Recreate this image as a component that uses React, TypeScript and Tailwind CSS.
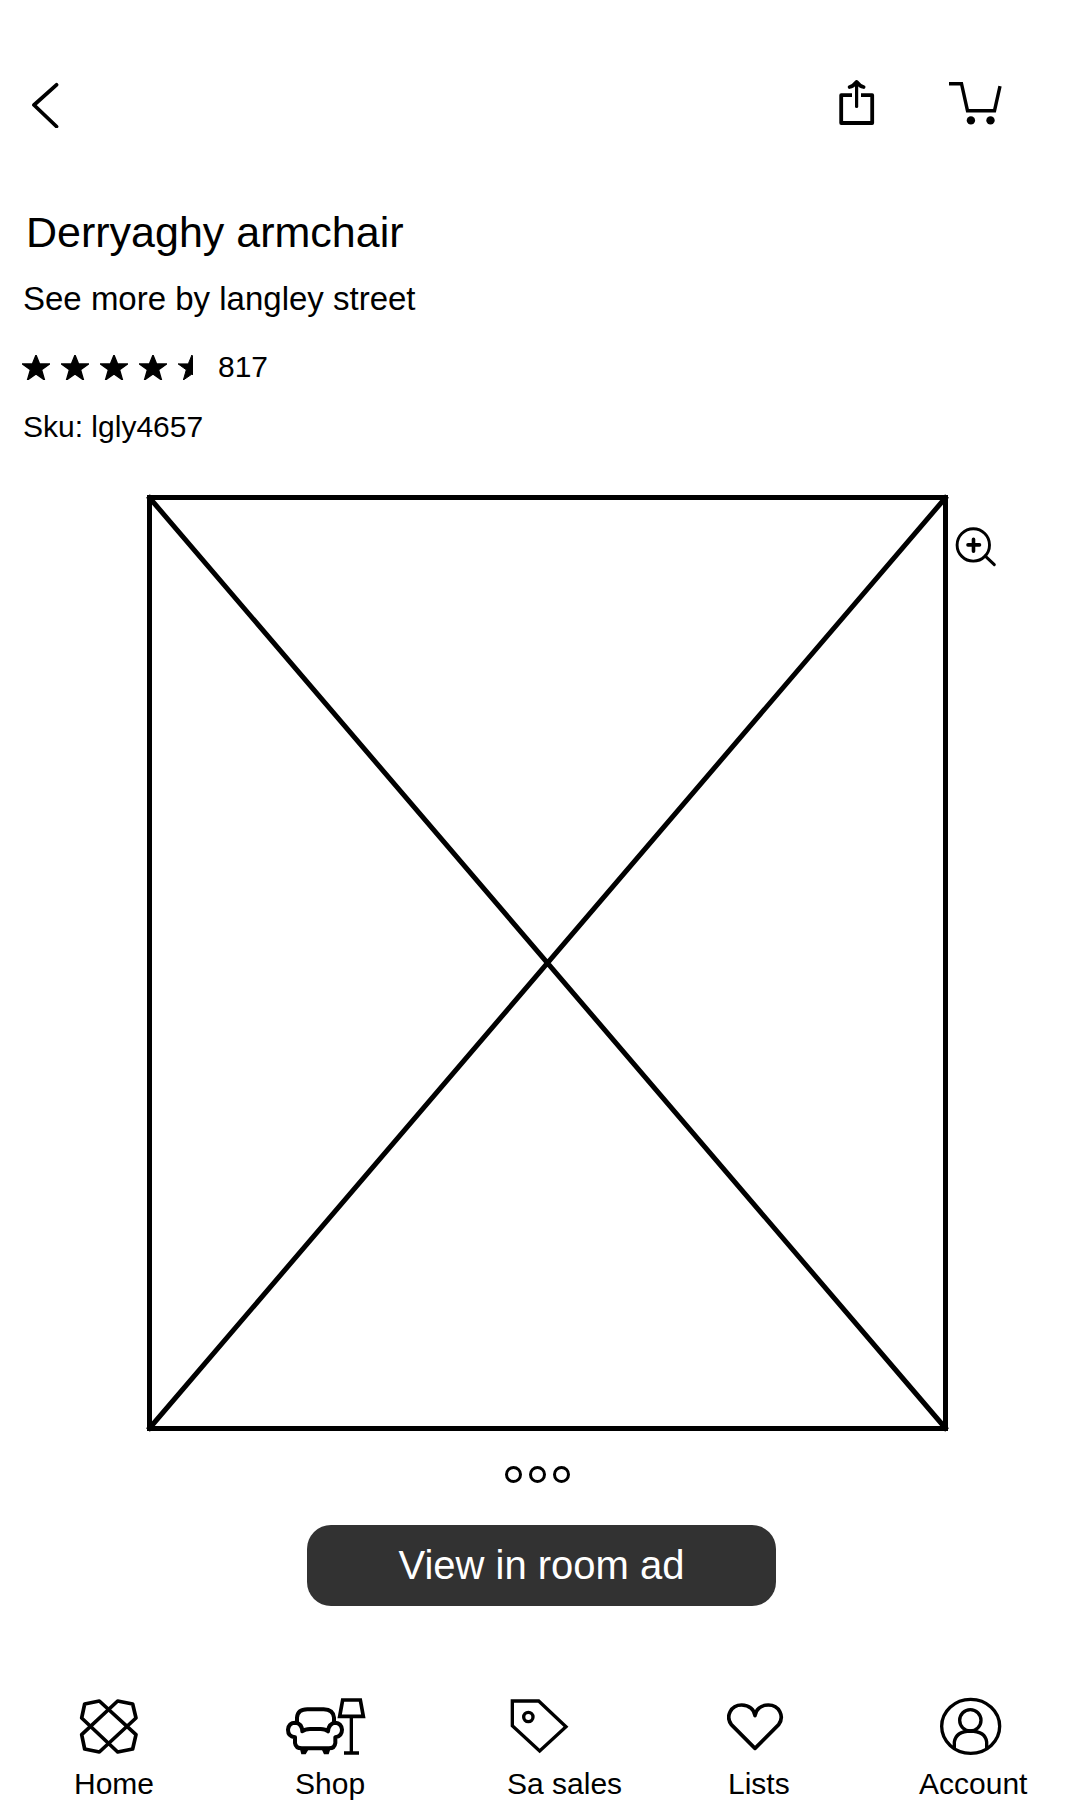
import type { ReactNode } from "react";

const STAR = "42,0 53,27 84,27 59,45 68,76 42,58 16,76 25,45 0,27 31,27";

function Star({ half = false }: { half?: boolean }) {
  return half ? (
    <svg className="h-[25px] w-[15px]" viewBox="0 0 45 76" aria-hidden="true">
      <polygon points={STAR} stroke="black" strokeWidth="3" />
    </svg>
  ) : (
    <svg className="h-[25px] w-7" viewBox="0 0 84 76" aria-hidden="true">
      <polygon points={STAR} stroke="black" strokeWidth="4" />
    </svg>
  );
}

function NavItem({ label, labelClass = "", children }: { label: string; labelClass?: string; children: ReactNode }) {
  return (
    <a href="#" className="flex flex-col items-start gap-3 text-[30px] leading-8 whitespace-nowrap">
      {children}
      <span className={labelClass}>{label}</span>
    </a>
  );
}

function Header() {
  return (
    <header className="flex items-center justify-between pt-[78px] pr-[76px] pl-[30px]">
      <button type="button" aria-label="Back">
        <svg className="h-[50px] w-[30px]" viewBox="30 78 30 50" fill="none" stroke="black" strokeWidth="3.8" strokeLinecap="round" strokeLinejoin="round">
          <path d="M56.5 84.8 34 105 56.5 126.5" />
        </svg>
      </button>
      <div className="flex gap-[68px]">
        <button type="button" aria-label="Share">
          <svg className="h-[50px] w-[42px]" viewBox="836 78 42 50" fill="none" stroke="black" strokeWidth="3.8" strokeLinejoin="round">
            <path d="M852 95.2H841.2V123H872.2V95.2H861" />
            <path d="M856.6 82V106.5" strokeWidth="3.2" strokeLinecap="round" />
            <path d="M849.6 87Q853 86.4 856.6 82Q860 86.4 863.6 87" strokeWidth="3.8" strokeLinecap="round" />
          </svg>
        </button>
        <button type="button" aria-label="Cart">
          <svg className="h-[50px] w-[58px]" viewBox="946 78 58 50" fill="none" stroke="black" strokeWidth="3.4">
            <path d="M949 83.7H961.5L967.5 110.7H994.5L1000 86.2" />
            <circle cx="970.9" cy="120.4" r="4.2" fill="black" stroke="none" />
            <circle cx="990.5" cy="120.4" r="4.2" fill="black" stroke="none" />
          </svg>
        </button>
      </div>
    </header>
  );
}

function ProductInfo() {
  return (
    <section className="mt-[78px] pl-[23px]">
      <h1 className="ml-[3px] text-[43px] leading-[52px]">Derryaghy armchair</h1>
      <a href="#" className="mt-[21px] block text-[33px] leading-10">
        See more by langley street
      </a>
      <div className="-ml-px mt-[30px] flex items-center text-[30px] leading-9">
        <div className="flex gap-[11px]" role="img" aria-label="4.5 out of 5 stars">
          <Star />
          <Star />
          <Star />
          <Star />
          <Star half />
        </div>
        <span className="ml-[25px]">817</span>
      </div>
      <p className="mt-6 text-[30px] leading-9">Sku: lgly4657</p>
    </section>
  );
}

function Gallery() {
  return (
    <section className="mt-[50px]">
      <div className="grid grid-cols-[147fr_801fr_132fr] items-start">
        <svg className="col-start-2 block w-full overflow-visible" viewBox="0 0 801 936" fill="none" stroke="black" role="img" aria-label="Product image">
          <rect x="2.5" y="2.5" width="796" height="931" strokeWidth="5" />
          <path d="M1 1 800 935M800 1 1 935" strokeWidth="5" />
        </svg>
        <button type="button" aria-label="Zoom in" className="mt-[31px] ml-1.5 justify-self-start">
          <svg className="h-[42px] w-[44px]" viewBox="954 526 44 42" fill="none" stroke="black" strokeLinecap="round">
            <circle cx="973.3" cy="544.9" r="16.2" strokeWidth="2.9" />
            <path d="M968 544.9H979.5M973.5 539.2V551.2" strokeWidth="3.6" />
            <path d="M985.3 556.2 994.3 564.7" strokeWidth="3" />
          </svg>
        </button>
      </div>
      <div className="mt-[35px] flex justify-center gap-[7px] pr-[5px]">
        <button type="button" aria-label="Image 1" className="size-[17px] rounded-full border-3 border-black" />
        <button type="button" aria-label="Image 2" className="size-[17px] rounded-full border-3 border-black" />
        <button type="button" aria-label="Image 3" className="size-[17px] rounded-full border-3 border-black" />
      </div>
    </section>
  );
}

function BottomNav() {
  return (
    <nav className="mt-[90px] grid grid-cols-[212fr_221fr_220fr_192fr_161fr] pl-[74px]">
      <NavItem label="Home">
        <svg className="h-[60px] w-20" viewBox="102 47 240 180" fill="none" stroke="black" strokeWidth="11" strokeLinejoin="round">
          <path d="M178 62 134 71 125 113 233 215 278 206 288 163Z" />
          <path d="M233 62 278 71 288 113 178 215 134 206 125 163Z" />
        </svg>
      </NavItem>
      <NavItem label="Shop" labelClass="pl-[9px]">
        <svg className="h-[60px] w-20" viewBox="78 47 240 180" fill="none" stroke="black" strokeWidth="12">
          <path d="M111 126V112Q113 87 142 87H191Q220 88 222 112V126" />
          <path d="M105 171Q84 168 84 148Q86 127 106 127Q126 129 127 153Q135 146 150 146H182Q196 146 204 153Q206 129 226 127Q244 128 246 148Q246 167 226 171V188Q224 204 207 204H126Q107 204 105 188Z" strokeLinejoin="round" />
          <path d="M120 207H146L137 222H124ZM185 207H211L206 222H192Z" fill="black" stroke="none" />
          <path d="M248 59H301L310 108H239Z" strokeWidth="11" />
          <path d="M274 108V218M252 218H297" strokeWidth="10" />
        </svg>
      </NavItem>
      <NavItem label="Sa sales">
        <svg className="h-[60px] w-20" viewBox="82 47 240 180" fill="none" stroke="black" strokeWidth="10">
          <path d="M98 62H177L259 139 180 212 98 136Z" />
          <circle cx="146" cy="110" r="14" strokeWidth="10" />
        </svg>
      </NavItem>
      <NavItem label="Lists" labelClass="pl-px">
        <svg className="h-[60px] w-[60px]" viewBox="81 47 180 180" fill="none" stroke="black" strokeWidth="11" strokeLinejoin="round">
          <path d="M165 204 94 133C76 108 92 74 125 74C148 74 163 88 165 106C167 88 182 74 205 74C238 74 254 108 236 133Z" />
        </svg>
      </NavItem>
      <NavItem label="Account">
        <svg className="h-[60px] w-[110px]" viewBox="57 48 330 180" fill="none" stroke="black" strokeWidth="10">
          <ellipse cx="212" cy="139" rx="87" ry="81" />
          <circle cx="211" cy="121" r="32" />
          <path d="M163 205V186Q168 154 211 153Q256 154 260 186V205" />
        </svg>
      </NavItem>
    </nav>
  );
}

export default function App() {
  return (
    <div className="overflow-x-hidden bg-white font-['Liberation_Sans',Arial,sans-serif] text-black">
      <Header />
      <main>
        <ProductInfo />
        <Gallery />
        <div className="mt-[42px] flex justify-center pl-[3px]">
          <button type="button" className="rounded-3xl bg-[#323232] px-[91px] py-4 text-[40px] leading-[49px] text-white">
            View in room ad
          </button>
        </div>
      </main>
      <BottomNav />
    </div>
  );
}
